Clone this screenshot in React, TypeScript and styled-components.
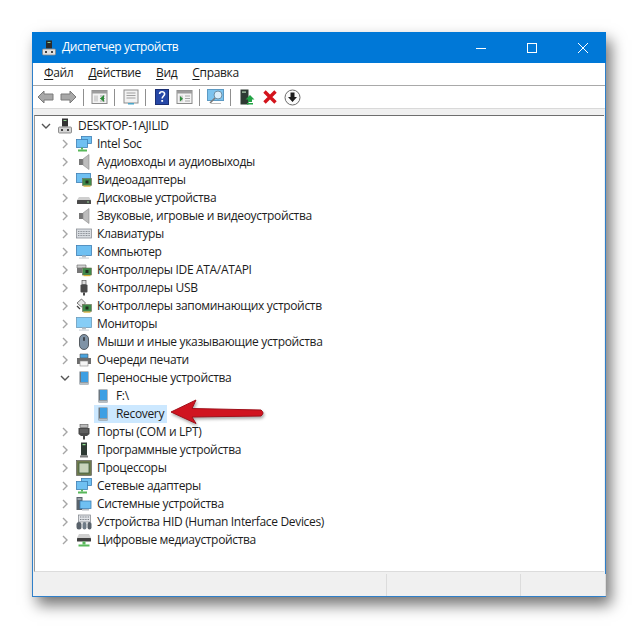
import React from "react";
import styled, { createGlobalStyle } from "styled-components";

const GlobalStyle = createGlobalStyle`
    html, body {
        margin: 0;
        padding: 0;
        background: #ffffff;
        font-family: "Open Sans", "Noto Sans", "Liberation Sans", sans-serif;
    }
`;

const Page = styled.div`
    width: 639px;
    height: 629px;
    padding: 32px 0 0 32px;
    box-sizing: border-box;
    overflow: hidden;
`;

const Window = styled.div`
    width: 574px;
    height: 565px;
    box-sizing: border-box;
    border: 1px solid #2f7fc9;
    border-top: none;
    background: #f0f0f0;
    display: flex;
    flex-direction: column;
    box-shadow: 5px 8px 14px rgba(0, 0, 0, 0.55);
`;

const TitleBar = styled.div`
    height: 31px;
    margin: 0 -1px;
    flex: none;
    background: #0078d7;
    display: flex;
    align-items: center;
    padding-left: 9px;
    color: #ffffff;
    font-size: 12px;
    gap: 5px;
`;

const TitleText = styled.span`
    flex: 1;
    letter-spacing: -0.4px;
    padding-bottom: 2px;
`;

const WinButton = styled.div`
    width: 46px;
    height: 31px;
    display: flex;
    align-items: center;
    justify-content: center;
`;

const MenuBar = styled.div`
    flex: none;
    height: 21px;
    background: #ffffff;
    border-bottom: 1px solid #a9a9a9;
    display: flex;
    align-items: center;
    padding: 0 0 1px 4px;
    font-size: 12px;
    color: #1a1a1a;
`;

const MenuItem = styled.span`
    padding: 0 7px 2px;
    margin-right: 1px;
    letter-spacing: -0.33px;
    u {
        text-underline-offset: 2px;
    }
`;

const ToolBar = styled.div`
    height: 22px;
    flex: none;
    background: #ffffff;
    border-bottom: 1px solid #d9d9d9;
    display: flex;
    align-items: center;
    padding-left: 1px;
`;

const ToolButton = styled.div`
    width: 23px;
    height: 22px;
    display: flex;
    align-items: center;
    justify-content: center;
`;

const ToolSep = styled.div`
    width: 1px;
    height: 17px;
    background: #8f8f8f;
    margin: 0 4px 0 3px;
`;

const Strip = styled.div`
    height: 6px;
    flex: none;
    background: #f0f0f0;
`;

const TreePane = styled.div`
    flex: 1;
    position: relative;
    margin: 0 1px;
    background: #ffffff;
    border-top: 1px solid #6e6e6e;
    border-left: 1px solid #9a9a9a;
    border-bottom: 1px solid #dcdcdc;
    padding-top: 1px;
    font-size: 12px;
    color: #1c1c1c;
`;

const Row = styled.div<{ $depth: number }>`
    height: 18px;
    display: flex;
    align-items: center;
    padding-left: ${p => 3 + p.$depth * 19}px;
`;

const Chevron = styled.div`
    width: 16px;
    height: 16px;
    margin-right: 2px;
    flex: none;
`;

const Label = styled.span<{ $selected?: boolean }>`
    display: flex;
    align-items: center;
    height: 18px;
    gap: 5px;
    padding: 0 3px 0 1px;
    background: ${p => (p.$selected ? "#cce8ff" : "transparent")};
    white-space: nowrap;
    letter-spacing: -0.33px;
`;

const LabelText = styled.span`
    padding-bottom: 1px;
`;

const PointerArrow = styled.svg`
    position: absolute;
    left: 134px;
    top: 283px;
    filter: drop-shadow(1px 2px 1.5px rgba(0, 0, 0, 0.35));
`;

const StatusBar = styled.div`
    height: 24px;
    flex: none;
    display: flex;
    background: #f0f0f0;
`;

const StatusCell = styled.div<{ $w: number }>`
    width: ${p => p.$w}px;
    border-right: 1px solid #dcdcdc;
    margin-top: 2px;
    flex: none;
`;

type IconName =
    | "host" | "net" | "sound" | "video" | "disk" | "keyboard" | "computer" | "ide" | "usb"
    | "storage" | "monitor" | "mouse" | "printer" | "phone" | "port" | "software" | "cpu"
    | "system" | "hid" | "media";

const Card = ({ x = 0, y = 0 }: { x?: number; y?: number }) => (
    <g transform={`translate(${x} ${y})`}>
        <rect x="0" y="0" width="9" height="7" fill="#3f8a4a" stroke="#6f6f55" strokeWidth="0.6" />
        <rect x="3" y="2" width="3" height="3" fill="#20301f" />
        <rect x="1" y="7" width="7" height="1.2" fill="#d6b23c" />
    </g>
);

const Screen = ({ x, y, w, h }: { x: number; y: number; w: number; h: number }) => (
    <rect x={x} y={y} width={w} height={h} fill="#6fc0f2" stroke="#3d7fb5" strokeWidth="0.8" />
);

const DeviceIcon = ({ name }: { name: IconName }) => {
    let art: React.ReactNode = null;
    if (name === "host") {
        art = (
            <>
                <rect x="5" y="0.5" width="6" height="8" fill="#333" />
                <rect x="6.5" y="2" width="3" height="1" fill="#8fd08f" />
                <rect x="1.5" y="9" width="13" height="6" rx="1" fill="#d5d5d5" stroke="#777" strokeWidth="0.8" />
                <rect x="4" y="11" width="2" height="2" fill="#444" />
                <rect x="10" y="11" width="2" height="2" fill="#444" />
            </>
        );
    } else if (name === "net") {
        art = (
            <>
                <Screen x={5.5} y={0.5} w={10} h={7} />
                <Screen x={0.5} y={3.5} w={11} h={8} />
                <rect x="5" y="11.5" width="2" height="2" fill="#58b85a" />
                <rect x="2" y="13.5" width="9" height="2" fill="#58b85a" />
            </>
        );
    } else if (name === "sound") {
        art = (
            <>
                <rect x="3" y="5" width="4" height="6" fill="#777" />
                <path d="M7 5 L13 0.5 V15.5 L7 11 Z" fill="#bdbdbd" stroke="#8a8a8a" strokeWidth="0.6" />
            </>
        );
    } else if (name === "video") {
        art = (
            <>
                <Screen x={0.5} y={1.5} w={14} h={9} />
                <Card x={6.5} y={6.5} />
            </>
        );
    } else if (name === "disk") {
        art = (
            <>
                <path d="M3 7 H13 L15 10 H1 Z" fill="#cfcfcf" />
                <rect x="1" y="10" width="14" height="4" rx="0.5" fill="#4a4a4a" />
                <rect x="11" y="11.5" width="2" height="1" fill="#9ad39a" />
            </>
        );
    } else if (name === "keyboard") {
        art = (
            <>
                <rect x="0.5" y="3" width="15" height="9" fill="#d9dde2" stroke="#8a8f96" strokeWidth="0.8" />
                <path d="M2 5.5 H14 M2 7.5 H14 M2 9.5 H14" stroke="#8a8f96" strokeWidth="1" strokeDasharray="1 0.6" />
            </>
        );
    } else if (name === "computer") {
        art = (
            <>
                <Screen x={0.5} y={1.5} w={15} h={10} />
                <rect x="6" y="11.5" width="4" height="2" fill="#b5bcc2" />
                <rect x="3" y="13.5" width="10" height="1.2" fill="#cfd5da" />
            </>
        );
    } else if (name === "ide") {
        art = (
            <>
                <path d="M1 3 H10 V6 H1 Z" fill="#d0d0d0" stroke="#666" strokeWidth="0.6" />
                <rect x="1" y="6" width="5" height="5" fill="#777" />
                <Card x={6.5} y={6} />
            </>
        );
    } else if (name === "usb") {
        art = (
            <>
                <rect x="6" y="0.5" width="4" height="4" fill="#dcdcdc" stroke="#555" strokeWidth="0.7" />
                <rect x="4.5" y="4.5" width="7" height="8" rx="1" fill="#4a4a4a" />
                <rect x="7" y="12.5" width="2" height="3" fill="#4a4a4a" />
            </>
        );
    } else if (name === "storage") {
        art = (
            <>
                <path d="M1 5 L5.5 1 L9.5 5 L5.5 9 Z" fill="#e5e5e5" stroke="#555" strokeWidth="0.8" />
                <path d="M1 8 L4 11" stroke="#444" strokeWidth="1.2" />
                <Card x={6.5} y={6.5} />
            </>
        );
    } else if (name === "monitor") {
        art = (
            <>
                <rect x="0.5" y="1.5" width="15" height="10" fill="#86cdf6" stroke="#6a9cbc" strokeWidth="0.8" />
                <rect x="6" y="11.5" width="4" height="2" fill="#b5bcc2" />
                <rect x="3" y="13.5" width="10" height="1.2" fill="#cfd5da" />
            </>
        );
    } else if (name === "mouse") {
        art = (
            <>
                <rect x="3.5" y="0.5" width="9" height="15" rx="4.5" fill="#7f93a6" stroke="#4a4f55" strokeWidth="0.9" />
                <rect x="7.2" y="3" width="1.6" height="4" rx="0.8" fill="#2f3338" />
            </>
        );
    } else if (name === "printer") {
        art = (
            <>
                <path d="M4 2 H12 V6 H4 Z" fill="#4aa3dd" stroke="#555" strokeWidth="0.6" />
                <path d="M1 6 H15 V12 H12 V9 H4 V12 H1 Z" fill="#6d6d6d" />
                <rect x="4" y="9" width="8" height="5" fill="#f5f5f5" stroke="#888" strokeWidth="0.6" />
            </>
        );
    } else if (name === "phone") {
        art = (
            <>
                <rect x="3.5" y="1.5" width="9" height="13" fill="#6b7780" />
                <rect x="5" y="2" width="7" height="10" fill="#3d9fe3" />
                <rect x="4" y="12.5" width="8.5" height="2" fill="#b7c0c6" />
            </>
        );
    } else if (name === "port") {
        art = (
            <>
                <rect x="4" y="0.5" width="8" height="3" fill="#bbb" stroke="#555" strokeWidth="0.6" />
                <path d="M2.5 4 H13.5 V10 L11 12 H5 L2.5 10 Z" fill="#4a4a4a" />
                <path d="M4.5 6 H11.5 M4.5 8 H11.5" stroke="#bdbdbd" strokeWidth="0.8" strokeDasharray="1 1" />
                <rect x="7" y="12" width="2" height="3.5" fill="#4a4a4a" />
            </>
        );
    } else if (name === "software") {
        art = (
            <>
                <rect x="5" y="0.5" width="6" height="13" fill="#2e3a33" />
                <rect x="6.5" y="2" width="3" height="1.2" fill="#8fe08f" />
                <rect x="4" y="13.5" width="8" height="2" fill="#7d7d7d" />
            </>
        );
    } else if (name === "cpu") {
        art = (
            <>
                <rect x="0.5" y="0.5" width="15" height="15" fill="#6f7a4d" stroke="#555" strokeWidth="0.6" />
                <rect x="3" y="3" width="10" height="10" fill="#c8d3bb" stroke="#3f5f3f" strokeWidth="0.8" />
            </>
        );
    } else if (name === "system") {
        art = (
            <>
                <rect x="0.5" y="1" width="6" height="13" fill="#59626b" />
                <rect x="1.5" y="2.5" width="4" height="1" fill="#d7dde2" />
                <Screen x={4} y={5} w={11} h={7.5} />
                <rect x="6" y="13" width="7" height="1.5" fill="#b5bcc2" />
            </>
        );
    } else if (name === "hid") {
        art = (
            <>
                <rect x="2.5" y="1" width="12" height="7" fill="#e1e4e8" stroke="#7c8087" strokeWidth="0.7" />
                <path d="M4 3 H13 M4 5.5 H13" stroke="#7c8087" strokeDasharray="1 0.6" />
                <rect x="0.5" y="8" width="5" height="7.5" rx="2.5" fill="#59626b" />
                <rect x="6.5" y="8" width="4" height="7.5" rx="2" fill="#6f7c88" />
                <rect x="11.5" y="8" width="4" height="7.5" rx="2" fill="#59626b" />
            </>
        );
    } else if (name === "media") {
        art = (
            <>
                <path d="M3 2 H13 L15 6 H1 Z" fill="#cfcfcf" />
                <rect x="1" y="6" width="14" height="3.5" rx="0.5" fill="#3f3f3f" />
                <rect x="6.5" y="9.5" width="3" height="3" fill="#58b85a" />
                <rect x="2.5" y="12.5" width="11" height="2" fill="#58b85a" />
            </>
        );
    }
    return (
        <svg width="16" height="16" viewBox="0 0 16 16" style={{ flex: "none" }}>
            {art}
        </svg>
    );
};

const ChevronIcon = ({ open }: { open?: boolean }) => (
    <svg width="16" height="16" viewBox="0 0 16 16">
        {open ? (
            <path d="M4 6 L8 10 L12 6" fill="none" stroke="#555" strokeWidth="1.4" />
        ) : (
            <path d="M6 4 L10 8 L6 12" fill="none" stroke="#a6a6a6" strokeWidth="1.4" />
        )}
    </svg>
);

type TreeRow = {
    text: string;
    icon: IconName;
    depth: number;
    open?: boolean;
    leaf?: boolean;
    selected?: boolean;
};

const rows: TreeRow[] = [
    { text: "DESKTOP-1AJILID", icon: "host", depth: 0, open: true },
    { text: "Intel Soc", icon: "net", depth: 1 },
    { text: "Аудиовходы и аудиовыходы", icon: "sound", depth: 1 },
    { text: "Видеоадаптеры", icon: "video", depth: 1 },
    { text: "Дисковые устройства", icon: "disk", depth: 1 },
    { text: "Звуковые, игровые и видеоустройства", icon: "sound", depth: 1 },
    { text: "Клавиатуры", icon: "keyboard", depth: 1 },
    { text: "Компьютер", icon: "computer", depth: 1 },
    { text: "Контроллеры IDE ATA/ATAPI", icon: "ide", depth: 1 },
    { text: "Контроллеры USB", icon: "usb", depth: 1 },
    { text: "Контроллеры запоминающих устройств", icon: "storage", depth: 1 },
    { text: "Мониторы", icon: "monitor", depth: 1 },
    { text: "Мыши и иные указывающие устройства", icon: "mouse", depth: 1 },
    { text: "Очереди печати", icon: "printer", depth: 1 },
    { text: "Переносные устройства", icon: "phone", depth: 1, open: true },
    { text: "F:\\", icon: "phone", depth: 2, leaf: true },
    { text: "Recovery", icon: "phone", depth: 2, leaf: true, selected: true },
    { text: "Порты (COM и LPT)", icon: "port", depth: 1 },
    { text: "Программные устройства", icon: "software", depth: 1 },
    { text: "Процессоры", icon: "cpu", depth: 1 },
    { text: "Сетевые адаптеры", icon: "net", depth: 1 },
    { text: "Системные устройства", icon: "system", depth: 1 },
    { text: "Устройства HID (Human Interface Devices)", icon: "hid", depth: 1 },
    { text: "Цифровые медиаустройства", icon: "media", depth: 1 }
];

const menu: { key: string; rest: string }[] = [
    { key: "Ф", rest: "айл" },
    { key: "Д", rest: "ействие" },
    { key: "В", rest: "ид" },
    { key: "С", rest: "правка" }
];

const PaneArt = ({ arrow }: { arrow: string }) => (
    <svg width="17" height="16" viewBox="0 0 17 16">
        <rect x="1" y="1.5" width="15" height="13" fill="#f3f3f3" stroke="#8b8b8b" />
        <rect x="1" y="1.5" width="15" height="3" fill="#9d9d9d" />
        <rect x="3" y="6.5" width="4" height="6" fill="#d4d4d4" />
        <path d="M9 7 H14 M9 9.5 H14 M9 12 H14" stroke="#a8a8a8" />
        <path d={arrow} fill="#2e8b3a" />
    </svg>
);

export default function App() {
    return (
        <Page>
            <GlobalStyle />
            <Window>
                <TitleBar>
                    <svg width="16" height="16" viewBox="0 0 16 16">
                        <rect x="5" y="0.5" width="6" height="8" fill="#2b2b2b" />
                        <rect x="6.5" y="2" width="3" height="1" fill="#8fd08f" />
                        <rect x="1.5" y="9" width="13" height="6" rx="1" fill="#e2e2e2" stroke="#888" strokeWidth="0.8" />
                        <rect x="4" y="11" width="2" height="2" fill="#444" />
                        <rect x="10" y="11" width="2" height="2" fill="#444" />
                    </svg>
                    <TitleText>Диспетчер устройств</TitleText>
                    <WinButton>
                        <svg width="12" height="12" viewBox="0 0 12 12">
                            <path d="M1 6.5 H11" stroke="#fff" strokeWidth="1" />
                        </svg>
                    </WinButton>
                    <WinButton>
                        <svg width="12" height="12" viewBox="0 0 12 12">
                            <rect x="1.5" y="1.5" width="9" height="9" fill="none" stroke="#fff" strokeWidth="1" />
                        </svg>
                    </WinButton>
                    <WinButton>
                        <svg width="12" height="12" viewBox="0 0 12 12">
                            <path d="M1 1 L11 11 M11 1 L1 11" stroke="#fff" strokeWidth="1" />
                        </svg>
                    </WinButton>
                </TitleBar>
                <MenuBar>
                    {menu.map(item => (
                        <MenuItem key={item.key}>
                            <u>{item.key}</u>
                            {item.rest}
                        </MenuItem>
                    ))}
                </MenuBar>
                <ToolBar>
                    <ToolButton>
                        <svg width="17" height="14" viewBox="0 0 17 14">
                            <path d="M1 7 L7 1 V4 H16 V10 H7 V13 Z" fill="#a8a8a8" stroke="#7a7a7a" />
                        </svg>
                    </ToolButton>
                    <ToolButton>
                        <svg width="17" height="14" viewBox="0 0 17 14">
                            <path d="M16 7 L10 1 V4 H1 V10 H10 V13 Z" fill="#a8a8a8" stroke="#7a7a7a" />
                        </svg>
                    </ToolButton>
                    <ToolSep />
                    <ToolButton>
                        <PaneArt arrow="M13 6 V13 L9 9.5 Z" />
                    </ToolButton>
                    <ToolSep />
                    <ToolButton>
                        <svg width="16" height="16" viewBox="0 0 16 16">
                            <rect x="1" y="1" width="14" height="13" fill="#f2f2f2" stroke="#8d8d8d" />
                            <path d="M3.5 4 H12.5 M3.5 6.5 H12.5 M3.5 9 H12.5" stroke="#a0a0a0" />
                            <rect x="5" y="14" width="6" height="1.5" fill="#4ba6c9" />
                        </svg>
                    </ToolButton>
                    <ToolSep />
                    <ToolButton>
                        <svg width="14" height="16" viewBox="0 0 14 16">
                            <rect x="0.5" y="0.5" width="13" height="15" fill="#2647a6" stroke="#1b2f73" />
                            <path d="M4.6 5 C4.6 2 9.6 2 9.6 5 C9.6 7 7.2 7 7.2 9.6" fill="none" stroke="#fff" strokeWidth="1.6" />
                            <rect x="6.3" y="11" width="1.8" height="1.8" fill="#fff" />
                        </svg>
                    </ToolButton>
                    <ToolButton>
                        <PaneArt arrow="M4 7 V12.5 L7 9.7 Z" />
                    </ToolButton>
                    <ToolSep />
                    <ToolButton>
                        <svg width="18" height="16" viewBox="0 0 18 16">
                            <rect x="0.5" y="0.5" width="16" height="11" fill="#7cc3ee" stroke="#5c9ac4" />
                            <circle cx="11" cy="6" r="4" fill="#d9eefb" stroke="#6d8fa6" />
                            <path d="M8 9 L3 14" stroke="#7a7a7a" strokeWidth="1.6" />
                            <path d="M4 14.5 H14" stroke="#bcbcbc" />
                        </svg>
                    </ToolButton>
                    <ToolSep />
                    <ToolButton>
                        <svg width="16" height="17" viewBox="0 0 16 17">
                            <rect x="1.5" y="0.5" width="8" height="15" fill="#2e3a33" />
                            <rect x="3" y="2.5" width="4" height="1.2" fill="#b5d8b5" />
                            <path d="M11 6 L15.5 10.5 H13 V13 H9 V10.5 H6.5 Z" fill="#22a344" />
                            <rect x="8" y="14" width="6" height="1.5" fill="#22a344" />
                        </svg>
                    </ToolButton>
                    <ToolButton>
                        <svg width="14" height="14" viewBox="0 0 14 14">
                            <path d="M1.5 1.5 L12.5 12.5 M12.5 1.5 L1.5 12.5" stroke="#d3141c" strokeWidth="3.4" />
                        </svg>
                    </ToolButton>
                    <ToolButton>
                        <svg width="17" height="17" viewBox="0 0 17 17">
                            <circle cx="8.5" cy="8.5" r="7.5" fill="#fafafa" stroke="#6b6b6b" />
                            <path d="M6.5 3.5 H10.5 V8 H13 L8.5 13 L4 8 H6.5 Z" fill="#1c1c1c" />
                        </svg>
                    </ToolButton>
                </ToolBar>
                <Strip />
                <TreePane>
                    {rows.map(row => (
                        <Row key={row.text} $depth={row.depth}>
                            <Chevron>{row.leaf ? null : <ChevronIcon open={row.open} />}</Chevron>
                            <Label $selected={row.selected}>
                                <DeviceIcon name={row.icon} />
                                <LabelText>{row.text}</LabelText>
                            </Label>
                        </Row>
                    ))}
                    <PointerArrow width="100" height="30" viewBox="0 0 100 30">
                        <path
                            d="M2 13 L27 1 L23 9.5 L92 11 Q96 14 92 17 L23 18 L27 24.5 Z"
                            fill="#d01420"
                            stroke="#a0101a"
                            strokeWidth="1"
                        />
                    </PointerArrow>
                </TreePane>
                <StatusBar>
                    <StatusCell $w={353} />
                    <StatusCell $w={133} />
                    <StatusCell $w={84} />
                </StatusBar>
            </Window>
        </Page>
    );
}
